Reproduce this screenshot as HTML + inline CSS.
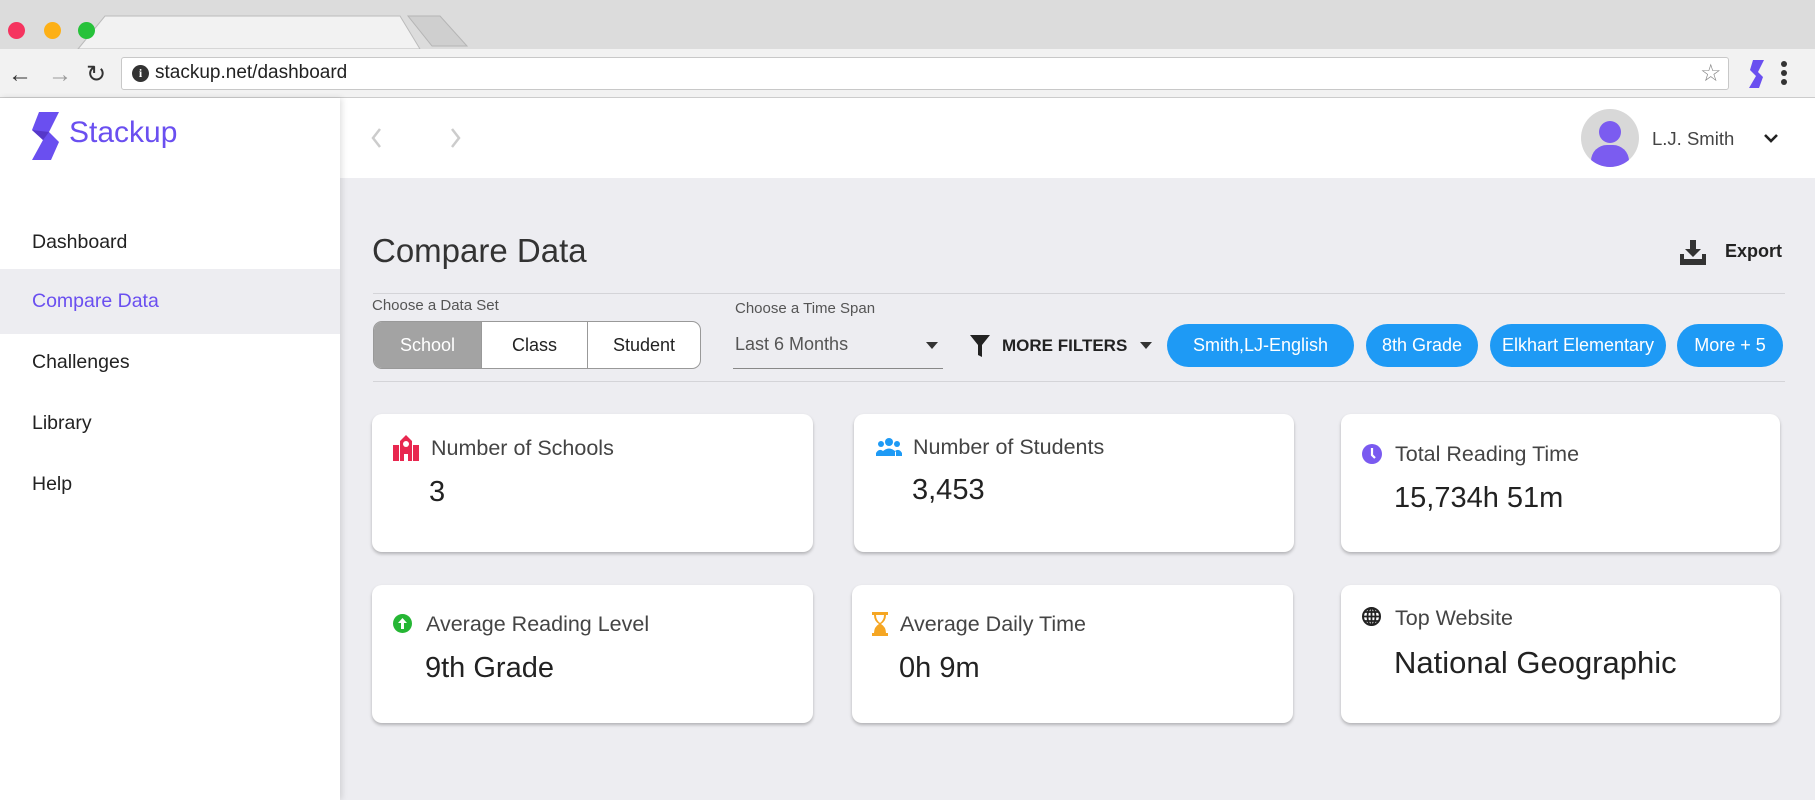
<!DOCTYPE html>
<html><head><meta charset="utf-8"><style>
*{margin:0;padding:0;box-sizing:border-box}
body{width:1815px;height:800px;overflow:hidden;background:#ededf1;font-family:"Liberation Sans",sans-serif;position:relative;color:#222}
.a{position:absolute;white-space:nowrap}
.card{position:absolute;background:#fff;border-radius:10px;box-shadow:0 2px 3px rgba(0,0,0,.25)}
.lbl{position:absolute;font-size:21.5px;color:#444;white-space:nowrap}
.val{position:absolute;font-size:29px;color:#222;white-space:nowrap}
.chip{position:absolute;top:324px;height:43px;background:#1e9af5;border-radius:22px;color:#fff;font-size:18px;line-height:43px;text-align:center}
.nav{position:absolute;left:32px;font-size:19.5px;color:#222}
</style></head><body>
<div class="a" style="left:0;top:0;width:1815px;height:49px;background:#dcdcdc"></div>
<svg class="a" style="left:0;top:0" width="480" height="50"><path d="M78 49 L105 16 L400 16 L420 49 Z" fill="#f2f2f2" stroke="#bbb"/><path d="M408 16 L440 16 L467 46 L432 46 Z" fill="#cfcfcf" stroke="#b5b5b5"/></svg>
<div class="a" style="left:8px;top:22px;width:17px;height:17px;border-radius:50%;background:#f5345f"></div>
<div class="a" style="left:44px;top:22px;width:17px;height:17px;border-radius:50%;background:#fdb016"></div>
<div class="a" style="left:78px;top:22px;width:17px;height:17px;border-radius:50%;background:#27c23a"></div>
<div class="a" style="left:0;top:49px;width:1815px;height:49px;background:#f2f2f2;border-bottom:1px solid #ccc"></div>
<div class="a" style="left:8px;top:61px;font-size:24px;color:#333">←</div>
<div class="a" style="left:48px;top:61px;font-size:24px;color:#999">→</div>
<div class="a" style="left:86px;top:60px;font-size:24px;color:#333">↻</div>
<div class="a" style="left:121px;top:57px;width:1608px;height:33px;background:#fff;border:1px solid #c8c8c8;border-radius:3px"></div>
<div class="a" style="left:132px;top:65px;width:17px;height:17px;border-radius:50%;background:#333;color:#fff;font:bold 12px 'Liberation Serif',serif;text-align:center;line-height:17px">i</div>
<div class="a" style="left:155px;top:62px;font-size:19px;color:#222">stackup.net/dashboard</div>
<div class="a" style="left:1700px;top:59px;font-size:24px;color:#888">☆</div>
<svg class="a" style="left:1748px;top:60px" width="18" height="28"><path d="M5 0 L16 0 L10 12 L15 17 L11 28 L1 28 L8 16 L2 10 Z" fill="#6a4ff0"/></svg>
<div class="a" style="left:1781px;top:61px;width:6px;height:6px;border-radius:50%;background:#333;box-shadow:0 9px 0 #333,0 18px 0 #333"></div>
<div class="a" style="left:340px;top:98px;width:1475px;height:80px;background:#fff"></div>
<svg class="a" style="left:370px;top:126px" width="100" height="24"><path d="M10 3 L3 12 L10 21" stroke="#ccc" stroke-width="2.5" fill="none"/><path d="M82 3 L89 12 L82 21" stroke="#ccc" stroke-width="2.5" fill="none"/></svg>
<div class="a" style="left:1581px;top:109px;width:58px;height:58px;border-radius:50%;background:#d8d8d8;overflow:hidden"><div style="position:absolute;left:18px;top:12px;width:22px;height:22px;border-radius:50%;background:#7b5cf0"></div><div style="position:absolute;left:10px;top:36px;width:38px;height:30px;border-radius:16px 16px 0 0;background:#7b5cf0"></div></div>
<div class="a" style="left:1652px;top:128px;font-size:18.5px;color:#444">L.J. Smith</div>
<svg class="a" style="left:1763px;top:133px" width="16" height="12"><path d="M2 2 L8 8 L14 2" stroke="#222" stroke-width="2.6" fill="none"/></svg>
<div class="a" style="left:0;top:98px;width:340px;height:702px;background:#fff;box-shadow:2px 0 6px rgba(0,0,0,.12)"></div>
<svg class="a" style="left:31px;top:112px" width="30" height="48"><path d="M8 0 L28 0 L18 20 L28 30 L20 48 L1 48 L12 28 L1 18 Z" fill="#6a4ff0"/><path d="M1 18 L12 28 L18 20 Z" fill="#5638c9"/></svg>
<div class="a" style="left:69px;top:116px;font-size:30px;color:#6a4ff0">Stackup</div>
<div class="a" style="left:0;top:269px;width:340px;height:65px;background:#ededf1"></div>
<div class="nav" style="top:231px">Dashboard</div>
<div class="nav" style="top:290px;color:#6a4ff0">Compare Data</div>
<div class="nav" style="top:351px">Challenges</div>
<div class="nav" style="top:412px">Library</div>
<div class="nav" style="top:473px">Help</div>
<div class="a" style="left:372px;top:232px;font-size:33px;color:#333">Compare Data</div>
<svg class="a" style="left:1680px;top:240px" width="26" height="25"><path d="M10 0 h6 v9 h5 l-8 8 l-8 -8 h5z" fill="#333"/><path d="M0 14 h4 v5 h18 v-5 h4 v11 h-26z" fill="#333"/></svg>
<div class="a" style="left:1725px;top:241px;font-size:18px;font-weight:bold;color:#222">Export</div>
<div class="a" style="left:373px;top:293px;width:1412px;height:1px;background:#d4d4d8"></div>
<div class="a" style="left:372px;top:297px;font-size:15px;color:#555">Choose a Data Set</div>
<div class="a" style="left:373px;top:321px;width:328px;height:48px;border:1px solid #999;border-radius:9px;background:#fff;overflow:hidden;font-size:18px;line-height:46px;text-align:center">
<div style="position:absolute;left:0;top:0;width:107px;height:46px;background:#a3a3a3;color:#fff">School</div>
<div style="position:absolute;left:107px;top:0;width:107px;height:46px;border-left:1px solid #999;border-right:1px solid #999">Class</div>
<div style="position:absolute;left:214px;top:0;width:112px;height:46px">Student</div></div>
<div class="a" style="left:735px;top:300px;font-size:15px;color:#555">Choose a Time Span</div>
<div class="a" style="left:735px;top:334px;font-size:18px;color:#555">Last 6 Months</div>
<div class="a" style="left:733px;top:368px;width:210px;height:1px;background:#888"></div>
<svg class="a" style="left:926px;top:342px" width="12" height="8"><path d="M0 0 H12 L6 7Z" fill="#333"/></svg>
<svg class="a" style="left:970px;top:335px" width="20" height="22"><path d="M0 0 H20 L12 10 V22 L8 20 V10Z" fill="#222"/></svg>
<div class="a" style="left:1002px;top:336px;font-size:17px;font-weight:bold;color:#222">MORE FILTERS</div>
<svg class="a" style="left:1140px;top:342px" width="12" height="8"><path d="M0 0 H12 L6 7Z" fill="#333"/></svg>
<div class="chip" style="left:1167px;width:187px">Smith,LJ-English</div>
<div class="chip" style="left:1366px;width:112px">8th Grade</div>
<div class="chip" style="left:1490px;width:176px">Elkhart Elementary</div>
<div class="chip" style="left:1677px;width:106px">More + 5</div>
<div class="a" style="left:373px;top:381px;width:1412px;height:1px;background:#d4d4d8"></div>
<div class="card" style="left:372px;top:414px;width:441px;height:138px"></div>
<div class="card" style="left:854px;top:414px;width:440px;height:138px"></div>
<div class="card" style="left:1341px;top:414px;width:439px;height:138px"></div>
<div class="card" style="left:372px;top:585px;width:441px;height:138px"></div>
<div class="card" style="left:852px;top:585px;width:441px;height:138px"></div>
<div class="card" style="left:1341px;top:585px;width:439px;height:138px"></div>
<svg class="a" style="left:393px;top:435px" width="26" height="26"><path d="M0 10 h6 v16 h-6z M20 10 h6 v16 h-6z M7 6 L13 0 L19 6 V26 H15 V19 H11 V26 H7Z" fill="#e8274f"/><circle cx="13" cy="9" r="3" fill="#fff"/></svg>
<div class="lbl" style="left:431px;top:436px">Number of Schools</div>
<div class="val" style="left:429px;top:476px">3</div>
<svg class="a" style="left:876px;top:438px" width="26" height="18"><circle cx="13" cy="4" r="4" fill="#1e9af5"/><circle cx="5" cy="6" r="3" fill="#1e9af5"/><circle cx="21" cy="6" r="3" fill="#1e9af5"/><path d="M6 18 v-4 q7 -7 14 0 v4z M0 18 v-3 q3 -5 7 -2 v5z M26 18 v-3 q-3 -5 -7 -2 v5z" fill="#1e9af5"/></svg>
<div class="lbl" style="left:913px;top:435px">Number of Students</div>
<div class="val" style="left:912px;top:474px">3,453</div>
<svg class="a" style="left:1362px;top:444px" width="20" height="20"><circle cx="10" cy="10" r="10" fill="#7a5af0"/><path d="M10 4 V11 L13 14" stroke="#fff" stroke-width="2.2" fill="none"/></svg>
<div class="lbl" style="left:1395px;top:442px">Total Reading Time</div>
<div class="val" style="left:1394px;top:482px">15,734h 51m</div>
<svg class="a" style="left:393px;top:614px" width="19" height="19"><circle cx="9.5" cy="9.5" r="9.5" fill="#25b634"/><path d="M9.5 4 L14 9 H11 V15 H8 V9 H5Z" fill="#fff"/></svg>
<div class="lbl" style="left:426px;top:612px">Average Reading Level</div>
<div class="val" style="left:425px;top:652px">9th Grade</div>
<svg class="a" style="left:872px;top:612px" width="16" height="24"><path d="M0 0 H16 V3 H14 Q14 9 9 12 Q14 15 14 21 H16 V24 H0 V21 H2 Q2 15 7 12 Q2 9 2 3 H0Z" fill="#f5a623"/><path d="M4 3 H12 Q12 8 8 11 Q4 8 4 3Z" fill="#fff"/></svg>
<div class="lbl" style="left:900px;top:612px">Average Daily Time</div>
<div class="val" style="left:899px;top:652px">0h 9m</div>
<svg class="a" style="left:1362px;top:607px" width="19" height="19"><circle cx="9.5" cy="9.5" r="8.5" fill="none" stroke="#222" stroke-width="2"/><path d="M1 9.5 H18 M9.5 1 V18 M3 5 H16 M3 14 H16" stroke="#222" stroke-width="1.8"/><ellipse cx="9.5" cy="9.5" rx="4" ry="8.5" fill="none" stroke="#222" stroke-width="1.8"/></svg>
<div class="lbl" style="left:1395px;top:606px">Top Website</div>
<div class="val" style="left:1394px;top:645px;font-size:31px">National Geographic</div>
</body></html>
